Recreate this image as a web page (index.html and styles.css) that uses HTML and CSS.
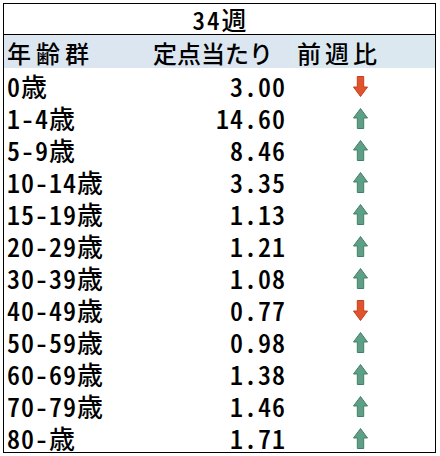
FILE: index.html
```html
<!DOCTYPE html>
<html lang="ja">
<head>
<meta charset="utf-8">
<link rel="stylesheet" href="styles.css">
</head>
<body>
<div class="sheet">
  <div class="title"><span class="num">34</span>週</div>
  <div class="row head">
    <div class="c1 sp">年齢群</div>
    <div class="c2">定点当たり</div>
    <div class="c3 sp2">前週比</div>
  </div>
  <div class="row"><div class="c1"><span class="num">0</span>歳</div><div class="c2 num">3.00</div><div class="c3"><svg class="arr" viewBox="0 0 15 21"><polygon class="dn" points="7.5,20.5 14.5,11 10.7,11 10.7,0.5 4.3,0.5 4.3,11 0.5,11"/></svg></div></div>
  <div class="row"><div class="c1"><span class="num">1-4</span>歳</div><div class="c2 num">14.60</div><div class="c3"><svg class="arr" viewBox="0 0 15 21"><polygon class="up" points="7.5,0.5 14.5,10 10.7,10 10.7,20.5 4.3,20.5 4.3,10 0.5,10"/></svg></div></div>
  <div class="row"><div class="c1"><span class="num">5-9</span>歳</div><div class="c2 num">8.46</div><div class="c3"><svg class="arr" viewBox="0 0 15 21"><polygon class="up" points="7.5,0.5 14.5,10 10.7,10 10.7,20.5 4.3,20.5 4.3,10 0.5,10"/></svg></div></div>
  <div class="row"><div class="c1"><span class="num">10-14</span>歳</div><div class="c2 num">3.35</div><div class="c3"><svg class="arr" viewBox="0 0 15 21"><polygon class="up" points="7.5,0.5 14.5,10 10.7,10 10.7,20.5 4.3,20.5 4.3,10 0.5,10"/></svg></div></div>
  <div class="row"><div class="c1"><span class="num">15-19</span>歳</div><div class="c2 num">1.13</div><div class="c3"><svg class="arr" viewBox="0 0 15 21"><polygon class="up" points="7.5,0.5 14.5,10 10.7,10 10.7,20.5 4.3,20.5 4.3,10 0.5,10"/></svg></div></div>
  <div class="row"><div class="c1"><span class="num">20-29</span>歳</div><div class="c2 num">1.21</div><div class="c3"><svg class="arr" viewBox="0 0 15 21"><polygon class="up" points="7.5,0.5 14.5,10 10.7,10 10.7,20.5 4.3,20.5 4.3,10 0.5,10"/></svg></div></div>
  <div class="row"><div class="c1"><span class="num">30-39</span>歳</div><div class="c2 num">1.08</div><div class="c3"><svg class="arr" viewBox="0 0 15 21"><polygon class="up" points="7.5,0.5 14.5,10 10.7,10 10.7,20.5 4.3,20.5 4.3,10 0.5,10"/></svg></div></div>
  <div class="row"><div class="c1"><span class="num">40-49</span>歳</div><div class="c2 num">0.77</div><div class="c3"><svg class="arr" viewBox="0 0 15 21"><polygon class="dn" points="7.5,20.5 14.5,11 10.7,11 10.7,0.5 4.3,0.5 4.3,11 0.5,11"/></svg></div></div>
  <div class="row"><div class="c1"><span class="num">50-59</span>歳</div><div class="c2 num">0.98</div><div class="c3"><svg class="arr" viewBox="0 0 15 21"><polygon class="up" points="7.5,0.5 14.5,10 10.7,10 10.7,20.5 4.3,20.5 4.3,10 0.5,10"/></svg></div></div>
  <div class="row"><div class="c1"><span class="num">60-69</span>歳</div><div class="c2 num">1.38</div><div class="c3"><svg class="arr" viewBox="0 0 15 21"><polygon class="up" points="7.5,0.5 14.5,10 10.7,10 10.7,20.5 4.3,20.5 4.3,10 0.5,10"/></svg></div></div>
  <div class="row"><div class="c1"><span class="num">70-79</span>歳</div><div class="c2 num">1.46</div><div class="c3"><svg class="arr" viewBox="0 0 15 21"><polygon class="up" points="7.5,0.5 14.5,10 10.7,10 10.7,20.5 4.3,20.5 4.3,10 0.5,10"/></svg></div></div>
  <div class="row"><div class="c1"><span class="num">80-</span>歳</div><div class="c2 num">1.71</div><div class="c3"><svg class="arr" viewBox="0 0 15 21"><polygon class="up" points="7.5,0.5 14.5,10 10.7,10 10.7,20.5 4.3,20.5 4.3,10 0.5,10"/></svg></div></div>
</div>
</body>
</html>
```
FILE: styles.css
```css
html, body {
  margin: 0;
  padding: 0;
  background: #fff;
}
body {
  font-family: "Noto Sans CJK JP", "Noto Sans", sans-serif;
  font-weight: 500;
  color: #000;
}
.sheet {
  box-sizing: border-box;
  width: 433px;
  margin: 3px 0 0 3px;
  border: 1px solid #000;
}
.num {
  font-feature-settings: "hwid" 1;
  letter-spacing: 1px;
}
.title {
  height: 30px;
  border-bottom: 1px solid #000;
  text-align: center;
  font-size: 25px;
  line-height: 30px;
}
.title .num {
  letter-spacing: 2px;
}
.row {
  display: grid;
  grid-template-columns: 146px 140px 1fr;
  height: 32px;
  font-size: 26px;
  line-height: 29px;
}
.row > div {
  padding-top: 3px;
  white-space: nowrap;
}
.head {
  height: 33px;
  background: #dce6f1;
  font-size: 24px;
}
.head .c3 {
  background: #dbe8f0;
}
.sp {
  letter-spacing: 5px;
}
.sp2 {
  letter-spacing: 4px;
}
.c1 {
  padding-left: 3px;
}
.c2.num {
  text-align: right;
  padding-right: 4px;
}
.head .c2 {
  padding-left: 3px;
}
.c3 {
  padding-left: 7px;
}
.arr {
  display: block;
  width: 15px;
  height: 21px;
  margin: 5px 0 0 56px;
}
.up {
  fill: #5f9f88;
  stroke: #40806a;
  stroke-width: 1;
}
.dn {
  fill: #e0532c;
  stroke: #c2411e;
  stroke-width: 1;
}
```
